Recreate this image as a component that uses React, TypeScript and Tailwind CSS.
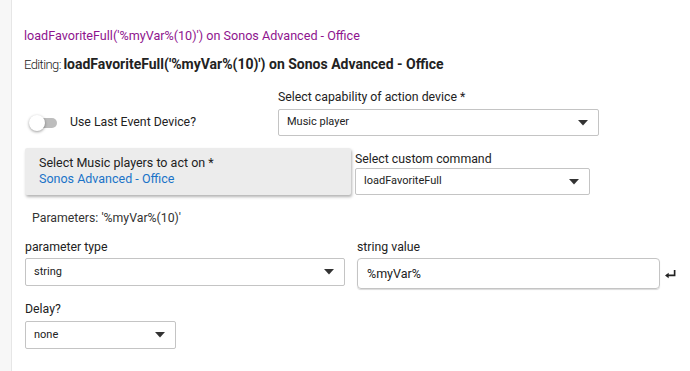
import React from "react";

// small caret used by the select boxes
const Caret = () => (
  <svg width="10" height="6" viewBox="0 0 10 6" className="shrink-0">
    <path d="M0 0h10L5 5.5z" fill="#333" />
  </svg>
);

const SelectBox = ({ value, className }: { value: string; className: string }) => (
  <div
    className={`flex items-center justify-between bg-white border border-[#c4c4c4] rounded-[2px] pl-[8px] pr-[10px] text-[11px] text-[#222] ${className}`}
  >
    <span>{value}</span>
    <Caret />
  </div>
);

export default function App() {
  return (
    <div
      className="flex w-[690px] h-[371px] bg-white overflow-hidden"
      style={{ fontFamily: "Roboto, 'Liberation Sans', sans-serif" }}
    >
      {/* left gutter */}
      <div className="w-[12px] shrink-0 bg-[#f7f7f7] border-r border-[#e6e6e6]" />

      <div className="flex-1 pl-[12px]">
        <div className="pt-[27px] text-[12.6px] text-[#8e148e] leading-[18px]">
          loadFavoriteFull('%myVar%(10)') on Sonos Advanced - Office
        </div>
        <div className="pt-[10px] text-[#222] leading-[18px]">
          <span className="text-[13px] font-light tracking-[-0.6px]">Editing: </span>
          <span className="text-[14px] font-bold">loadFavoriteFull('%myVar%(10)') on Sonos Advanced - Office</span>
        </div>

        {/* toggle + capability */}
        <div className="flex mt-[15px]">
          <div className="flex items-center w-[254px] pt-[20px]">
            <div className="relative w-[28px] h-[14px] ml-[5px]">
              <div className="absolute left-[6px] top-[2px] w-[22px] h-[10px] rounded-full bg-[#bdbdbd]" />
              <div className="absolute left-0 top-[-1px] w-[16px] h-[16px] rounded-full bg-white shadow-[0_1px_3px_rgba(0,0,0,0.4)]" />
            </div>
            <span className="ml-[13px] text-[12.3px] text-[#222]">Use Last Event Device?</span>
          </div>
          <div className="flex flex-col">
            <span className="text-[12.3px] text-[#222] leading-[16px]">Select capability of action device *</span>
            <SelectBox value="Music player" className="mt-[4px] w-[321px] h-[27px]" />
          </div>
        </div>

        {/* device chooser + custom command */}
        <div className="flex mt-[12px] ml-[1px]">
          <div className="w-[326px] h-[47px] bg-[#ececec] rounded-[2px] shadow-[1px_2px_3px_rgba(0,0,0,0.3)] pl-[14px] pt-[7px] text-[12.5px] leading-[16px]">
            <div className="text-[#222]">Select Music players to act on *</div>
            <div className="text-[#1a73c8]">Sonos Advanced - Office</div>
          </div>
          <div className="flex flex-col ml-[4px] mt-[3px]">
            <span className="text-[12.3px] text-[#222] leading-[16px]">Select custom command</span>
            <SelectBox value="loadFavoriteFull" className="mt-[1px] w-[235px] h-[27px]" />
          </div>
        </div>

        <div className="mt-[14px] ml-[8px] text-[12.3px] text-[#333]">Parameters: '%myVar%(10)'</div>

        {/* parameter type + string value */}
        <div className="flex mt-[12px] ml-[1px]">
          <div className="flex flex-col">
            <span className="text-[12.3px] text-[#222] leading-[16px]">parameter type</span>
            <SelectBox value="string" className="mt-[3px] w-[320px] h-[28px]" />
          </div>
          <div className="flex flex-col ml-[12px]">
            <span className="text-[12.3px] text-[#222] leading-[16px]">string value</span>
            <div className="flex items-center mt-[3px]">
              <div className="flex items-center w-[303px] h-[31px] border border-[#c4c4c4] rounded-[4px] shadow-[0_1px_1px_rgba(0,0,0,0.15)] pl-[9px] text-[12.5px] text-[#222]">
                %myVar%
              </div>
              <svg width="13" height="11" viewBox="0 0 14 12" className="ml-[4px] mt-[2px]">
                <path d="M11.5 1v6H3" stroke="#222" strokeWidth="1.8" fill="none" />
                <path d="M1 7l4-3v6z" fill="#222" />
              </svg>
            </div>
          </div>
        </div>

        {/* delay */}
        <div className="flex flex-col mt-[12px] ml-[1px]">
          <span className="text-[12.3px] text-[#222] leading-[16px]">Delay?</span>
          <SelectBox value="none" className="mt-[4px] w-[151px] h-[28px]" />
        </div>
      </div>
    </div>
  );
}
